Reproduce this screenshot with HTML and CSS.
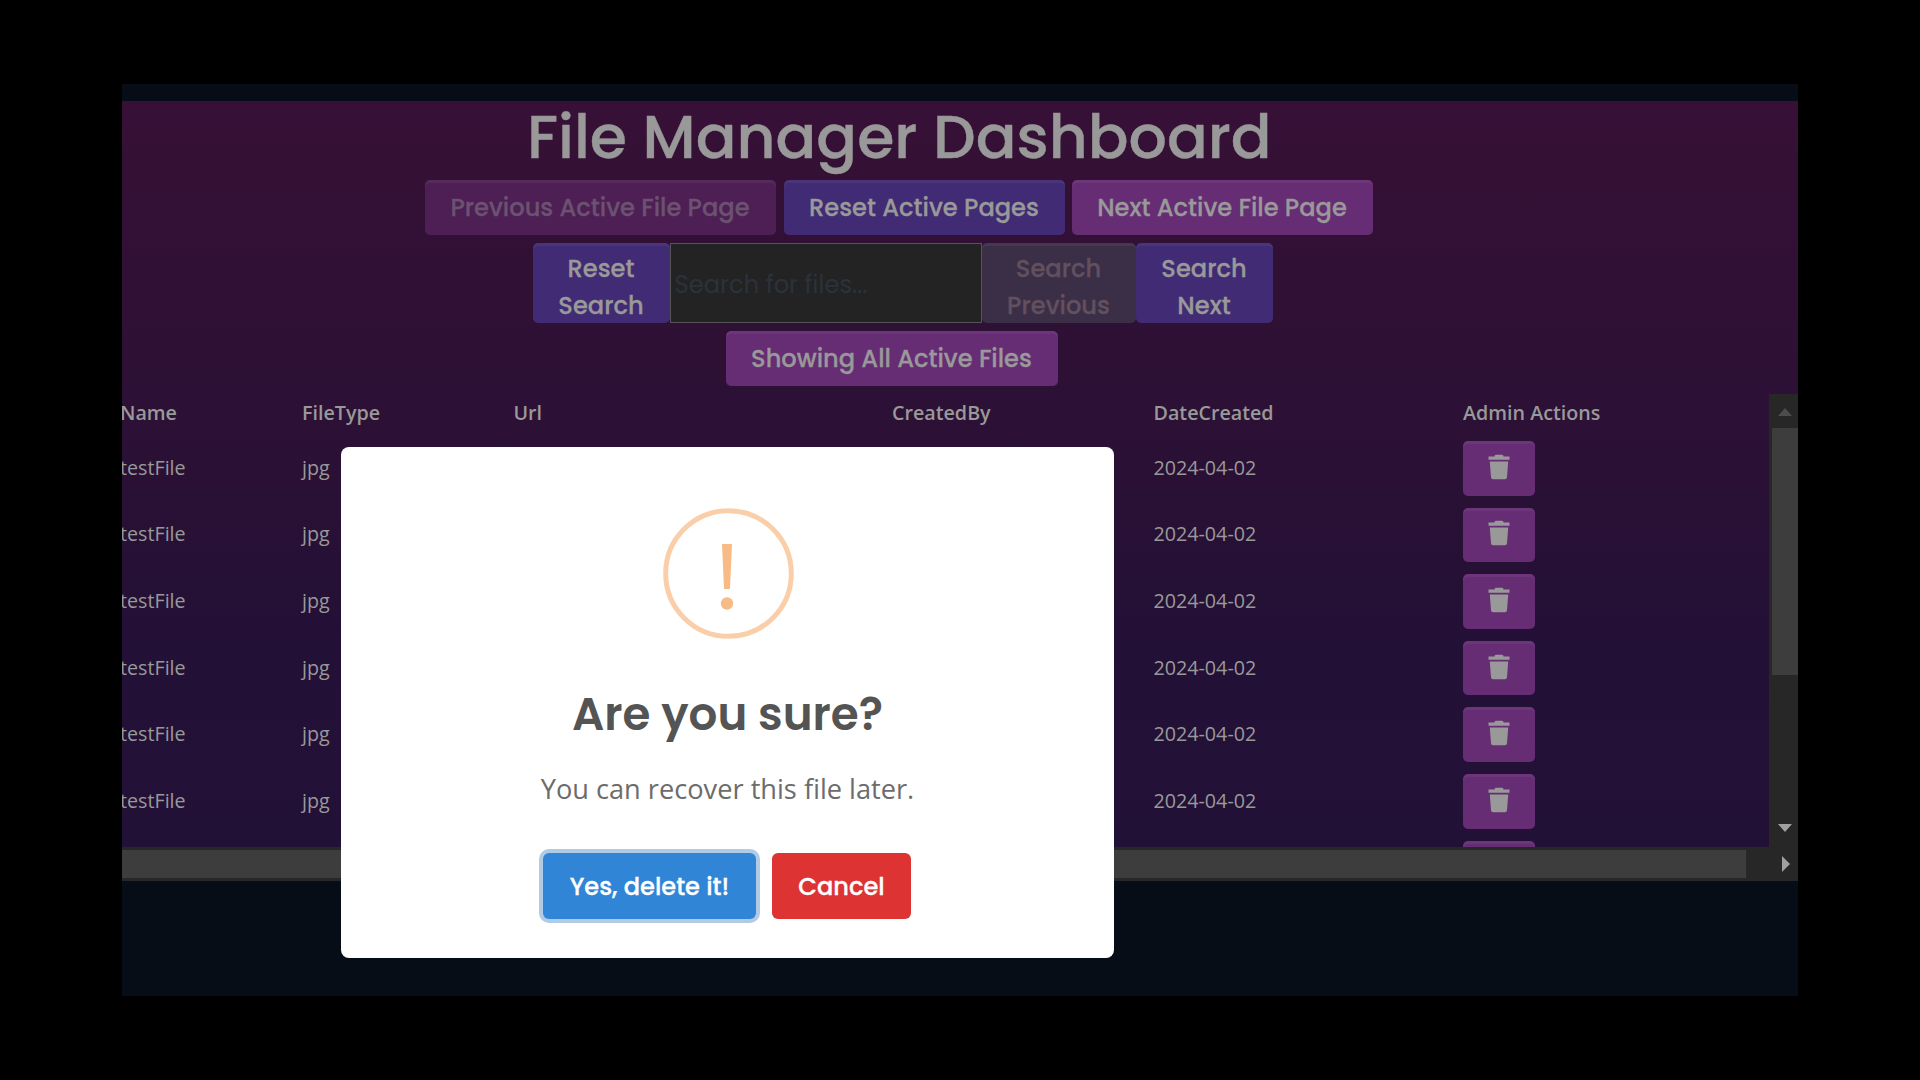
FILE: index.html
```html
<!DOCTYPE html>
<html lang="en">
<head>
<meta charset="utf-8">
<title>File Manager Dashboard</title>
<link rel="stylesheet" href="styles.css">
</head>
<body>
<svg class="defs"><symbol id="trash" viewBox="0 0 22 26"><path d="M.5 2.500h6.100V1.700Q7 .8 8 .8h6q1 0 1.400.9v.8h6.100v3.200H.5zM1.800 7.500h18.400l-1.200 15.800q-.2 2-2 2H5q-1.800 0-2-2z" fill="#999"/></symbol></svg>
<div class="screen">
  <main class="panel">
    <header class="controls">
      <h1>File Manager Dashboard</h1>
      <div class="row pages">
        <button class="btn purple w-prev" disabled><span>Previous Active File Page</span></button>
        <button class="btn indigo w-reset"><span>Reset Active Pages</span></button>
        <button class="btn purple w-next"><span>Next Active File Page</span></button>
      </div>
      <div class="row search">
        <button class="btn indigo w-side">Reset<br>Search</button>
        <input class="query" placeholder="Search for files...">
        <button class="btn slate w-sprev">Search<br>Previous</button>
        <button class="btn indigo w-side">Search<br>Next</button>
      </div>
      <div class="row filter"><button class="btn purple w-all"><span>Showing All Active Files</span></button></div>
    </header>
    <div class="scroller">
      <div class="table">
        <div class="tr head"><span>Name</span><span>FileType</span><span>Url</span><span>CreatedBy</span><span>DateCreated</span><span>Admin Actions</span></div>
        <div class="tr"><span>testFile</span><span>jpg</span><span></span><span></span><span>2024-04-02</span><button class="btn purple del"><svg><use href="#trash"/></svg></button></div>
        <div class="tr"><span>testFile</span><span>jpg</span><span></span><span></span><span>2024-04-02</span><button class="btn purple del"><svg><use href="#trash"/></svg></button></div>
        <div class="tr"><span>testFile</span><span>jpg</span><span></span><span></span><span>2024-04-02</span><button class="btn purple del"><svg><use href="#trash"/></svg></button></div>
        <div class="tr"><span>testFile</span><span>jpg</span><span></span><span></span><span>2024-04-02</span><button class="btn purple del"><svg><use href="#trash"/></svg></button></div>
        <div class="tr"><span>testFile</span><span>jpg</span><span></span><span></span><span>2024-04-02</span><button class="btn purple del"><svg><use href="#trash"/></svg></button></div>
        <div class="tr"><span>testFile</span><span>jpg</span><span></span><span></span><span>2024-04-02</span><button class="btn purple del"><svg><use href="#trash"/></svg></button></div>
        <div class="tr"><span></span><span></span><span></span><span></span><span></span><button class="btn purple del"></button></div>
      </div>
      <div class="vbar"><i class="up"></i><div class="vthumb"></div><i class="down"></i></div>
    </div>
  </main>
  <div class="hbar"><div class="hthumb"></div><i class="right"></i></div>
</div>
<div class="modal" role="dialog">
  <svg class="warn" viewBox="0 0 131 131"><circle cx="65.500" cy="65.500" r="62.800" fill="none" stroke="#facea8" stroke-width="5"/><path d="M59 36h10l-2 45h-6z" fill="#f8bb86"/><circle cx="64" cy="95.500" r="6.200" fill="#f8bb86"/></svg>
  <h2>Are you sure?</h2>
  <p>You can recover this file later.</p>
  <div class="actions"><button class="mbtn yes">Yes, delete it!</button><button class="mbtn cancel">Cancel</button></div>
</div>
</body>
</html>
```
FILE: styles.css
```css
* { box-sizing: border-box; }
body { margin: 0; width: 1920px; height: 1080px; padding: 84px 122px; background: #000; overflow: hidden; font-family: "Open Sans", "Noto Sans", sans-serif; color: #999; }
.defs { display: none; }
.screen { width: 1676px; height: 912px; padding-top: 17px; background: #060d16; overflow: hidden; }
.panel { height: 746px; background: linear-gradient(#371036, #2c1035 45%, #241036 70%, #221136); overflow: hidden; }
.controls { height: 293px; display: flex; flex-direction: column; }
h1, .btn, .query, h2, .mbtn { font-family: Poppins, Inter, sans-serif; }
h1 { margin: 0 0 0 405px; height: 79px; line-height: 72px; font-size: 60.2px; font-weight: 500; white-space: nowrap; -webkit-text-stroke: .4px #999; }
.row { display: flex; }
.pages { margin-left: 302.5px; height: 63px; }
.search { margin-left: 410.5px; height: 88px; align-items: flex-start; }
.filter { margin-left: 603.5px; }
.btn { height: 55px; border: 0; border-radius: 5px; padding: 0; display: flex; align-items: center; justify-content: center; font-size: 24.15px; font-weight: 500; line-height: 37px; color: #999; white-space: nowrap; text-align: center; box-shadow: inset 0 3px rgba(255,255,255,.05); -webkit-text-stroke: .3px; }
.purple { background: #662c74; }
.indigo { background: #412b74; }
.slate { background: #3b2e47; color: #62505f; }
.btn:disabled { background: #4d1f55; color: #6b5270; }
.w-prev { width: 351px; margin-right: 8px; }
.w-reset { width: 281px; margin-right: 7px; }
.w-next { width: 301px; }
.search .btn, .query { height: 80px; }
.search .btn { padding-top: 7px; }
.w-side { width: 137px; }
.w-sprev { width: 154px; }
.w-all { width: 332px; }
.query { width: 312px; padding: 2px 4px 0; background: #232323; border: 1px solid #555; font-size: 24.2px; }
.query::placeholder { color: #2b323b; }
.scroller { height: 453px; display: flex; justify-content: space-between; overflow: hidden; }
.table { width: 1647px; font-size: 19.7px; }
.tr { display: grid; grid-template-columns: 182px 211.5px 378.5px 261.5px 309.5px 1fr; height: 66.600px; align-items: center; margin-left: -2px; }
.tr span { line-height: 28px; margin-top: -1px; }
.head { height: 41px; font-weight: 600; }
.tr.head span { margin-top: -3px; }
.del { width: 72px; height: 54.500px; }
.del svg { width: 22px; height: 26px; margin-top: -3px; }
.vbar { width: 29px; background: #272727; display: flex; flex-direction: column; padding-left: 3px; }
.vthumb { height: 247px; margin-top: 12px; background: #3d3d3d; }
i { display: block; }
.up { border: 7px solid transparent; border-top: 0; border-bottom: 8px solid #4d4d4d; width: 0; margin: 14px 0 0 6px; }
.down { border: 7px solid transparent; border-bottom: 0; border-top: 8px solid #a0a0a0; width: 0; margin: 149px 0 0 6px; }
.hbar { height: 34px; background: #272727; display: flex; align-items: center; }
.hthumb { width: 1624px; height: 28px; background: #3d3d3d; }
.right { border: 8px solid transparent; border-right: 0; border-left: 8px solid #a0a0a0; margin-left: 36px; }
.modal { position: absolute; left: 341px; top: 447px; width: 773px; height: 511px; border-radius: 8px; background: #fff; display: flex; flex-direction: column; align-items: center; padding-top: 61px; }
.warn { width: 131px; height: 131px; margin-left: 1px; }
h2 { margin: 46px 0 0; font-size: 45.200px; line-height: 60px; font-weight: 600; color: #545454; }
.modal p { margin: 25px 0 0; font-size: 27.200px; line-height: 38px; color: #6c6c6c; white-space: nowrap; }
.actions { display: flex; margin-top: 45px; gap: 16px; margin-right: 1px; }
.mbtn { height: 66px; border: 0; border-radius: 6px; color: #fff; font-size: 24.1px; font-weight: 500; padding: 0; white-space: nowrap; -webkit-text-stroke: .3px; }
.yes { width: 213px; background: #3085d6; box-shadow: 0 0 0 4px #b1cae5; }
.cancel { width: 139px; background: #dd3333; }
```
